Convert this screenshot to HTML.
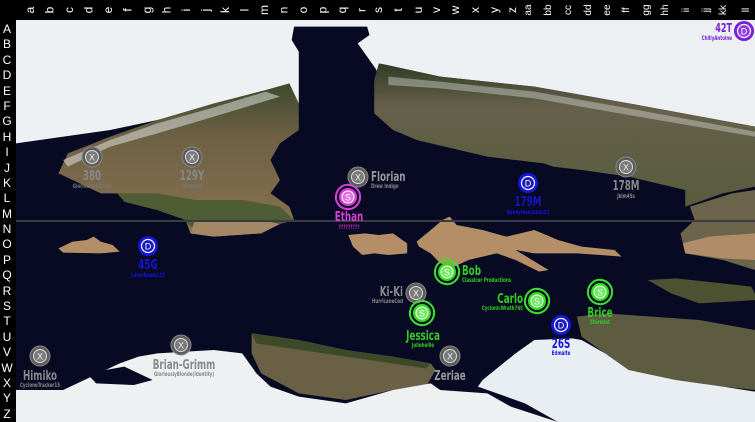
<!DOCTYPE html>
<html><head><meta charset="utf-8"><style>
*{margin:0;padding:0}
body{width:755px;height:422px;background:#000;overflow:hidden;position:relative;font-family:"Liberation Sans",sans-serif}
#map{position:absolute;left:16px;top:20px;width:739px;height:402px}
#ov{position:absolute;left:0;top:0}
</style></head><body>
<svg id="map" viewBox="0 0 1568 1206" preserveAspectRatio="none">
<defs>
<linearGradient id="lg" x1="0" y1="0" x2="0" y2="1"><stop offset="0" stop-color="#3d4a2c"/><stop offset=".35" stop-color="#6e6145"/><stop offset=".7" stop-color="#7d6a4c"/><stop offset="1" stop-color="#8a7452"/></linearGradient>
<linearGradient id="rg" x1="0" y1="0" x2="0" y2="1"><stop offset="0" stop-color="#2f3b24"/><stop offset=".3" stop-color="#66604a"/><stop offset="1" stop-color="#585c3e"/></linearGradient>
</defs>
<rect width="1568" height="1206" fill="#070a22"/>
<polygon fill="#eef1f3" points="0,0 780,0 780,130 770,230 740,215 600,250 530,215 420,260 300,300 200,330 0,370"/>
<polygon fill="#edf0f2" points="760,0 1568,0 1568,320 1300,250 1100,200 900,170 770,130"/>
<polygon fill="#070a22" points="590,20 745,20 750,45 725,70 745,110 765,150 770,270 600,270 600,95 585,60"/>
<polygon fill="url(#lg)" points="90,460 110,400 200,350 300,300 420,250 530,210 580,190 600,250 600,330 560,370 540,420 560,480 540,520 580,560 590,600 560,612 520,640 420,650 370,640 360,600 300,570 230,545 215,520 180,520 120,480"/>
<polygon fill="#4e5d33" points="215,520 300,520 380,540 480,540 560,560 590,600 560,612 520,620 420,630 370,620 360,600 300,570 230,545"/>
<polygon fill="#a48865" points="380,600 520,600 560,612 520,640 420,650 370,640"/>
<polygon fill="#e8ebec" opacity=".5" points="100,420 200,360 300,310 420,262 530,215 560,230 420,290 300,340 200,380 110,440"/>
<polygon fill="url(#rg)" points="760,180 770,130 900,170 1100,200 1300,250 1568,320 1568,500 1500,520 1420,560 1420,510 1300,470 1200,450 1140,440 1120,430 1000,410 850,360 800,330 760,280"/>
<polygon fill="#dfe3e4" opacity=".4" points="790,170 900,185 1100,215 1300,265 1568,335 1568,350 1300,285 1100,235 900,205 790,195"/>
<polygon fill="#6c654c" points="1430,560 1520,520 1568,510 1568,750 1500,720 1420,700 1410,640 1440,600"/>
<polygon fill="#b08d68" points="1415,670 1470,650 1568,640 1568,720 1500,715 1420,700"/>
<polygon fill="#4d5233" points="1340,780 1400,775 1500,790 1560,800 1575,840 1450,850 1390,820"/>
<g fill="#b48e67">
<polygon points="90,685 120,665 150,660 165,650 180,665 205,675 220,695 180,700 100,698"/>
<polygon points="705,645 740,640 770,645 800,640 830,670 830,700 790,705 760,700 735,705 715,680"/>
<polygon points="850,665 880,630 905,600 920,590 935,615 990,630 1040,650 1100,630 1150,660 1200,680 1270,690 1285,710 1240,705 1190,700 1100,700 1060,690 1130,750 1110,755 1060,720 1020,700 960,720 930,740 900,730 880,700 855,680"/>
</g>
<polygon fill="#5e5c40" points="1190,890 1250,880 1350,890 1450,900 1568,930 1568,1110 1500,1100 1400,1080 1300,1050 1250,1000 1200,950"/>
<polygon fill="#6a6046" points="500,940 600,960 700,990 800,1010 880,1030 890,1050 870,1100 800,1110 700,1140 600,1120 520,1060 500,1000"/>
<polygon fill="#3c4a2a" points="500,940 600,960 700,990 800,1010 880,1030 870,1045 700,1010 510,970"/>
<polygon fill="#eef0f2" points="0,1206 0,1110 100,1110 160,1070 220,1030 260,1010 300,1000 420,990 480,1000 510,1060 540,1100 600,1130 700,1150 800,1110 880,1090 900,1110 1000,1120 1050,1160 1150,1206"/>
<polygon fill="#070a22" points="150,1060 230,1040 290,1080 250,1095 170,1090"/>
<polygon fill="#e9eef2" points="990,1080 1060,1000 1100,960 1180,955 1200,960 1250,1000 1300,1050 1400,1080 1500,1100 1568,1115 1568,1206 1150,1206 1080,1150 980,1100"/>
<rect x="0" y="600" width="1568" height="6" fill="#3a3b46"/>
</svg>

<svg id="ov" width="755" height="422" viewBox="0 0 755 422">
<defs>
<g id="X"><circle r="10" fill="#5c5c5c" stroke="#8a8a8a" stroke-width="1"/><circle r="6.5" fill="#7a7a7a" stroke="#ddd" stroke-width="1"/><text y="3.5" text-anchor="middle" font-size="9" fill="#eee">X</text></g>
<g id="D"><circle r="10" fill="#1515e0"/><circle r="6.5" fill="#1a1ab8" stroke="#fff" stroke-width="1.2"/><text y="3.5" text-anchor="middle" font-size="9" fill="#fff">D</text></g>
<g id="S"><g fill="none" stroke="#3ce02a" stroke-width="2"><path d="M0,-12 A12,12 0 0 1 12,2"/><path d="M12,0 A12,12 0 0 1 -2,12"/><path d="M0,12 A12,12 0 0 1 -12,-2"/><path d="M-12,0 A12,12 0 0 1 2,-12"/></g><circle r="9" fill="#33dd22"/><circle r="6" fill="#6fe860" stroke="#fff" stroke-width="1"/><text y="3.5" text-anchor="middle" font-size="9" fill="#fff">S</text></g>
<g id="M"><g fill="none" stroke="#d83fd8" stroke-width="2"><path d="M0,-12 A12,12 0 0 1 12,2"/><path d="M12,0 A12,12 0 0 1 -2,12"/><path d="M0,12 A12,12 0 0 1 -12,-2"/><path d="M-12,0 A12,12 0 0 1 2,-12"/></g><circle r="9" fill="#d43fd4"/><circle r="6" fill="#e070e0" stroke="#fff" stroke-width="1"/><text y="3.5" text-anchor="middle" font-size="9" fill="#fff">S</text></g>
</defs>
<use href="#X" x="92" y="157"/><use href="#X" x="192" y="157"/><use href="#X" x="358" y="177"/><use href="#M" x="348" y="197"/><use href="#D" x="528" y="183"/><use href="#X" x="626" y="167"/><use href="#D" x="148" y="246"/><use href="#S" x="447" y="272"/><use href="#X" x="416" y="293"/><use href="#S" x="422" y="313"/><use href="#S" x="537" y="301"/><use href="#S" x="600" y="292"/><use href="#D" x="561" y="325"/><use href="#X" x="40" y="356"/><use href="#X" x="181" y="345"/><use href="#X" x="450" y="356"/>
<circle cx="744" cy="31" r="10" fill="#7a1fd6"/><circle cx="744" cy="31" r="6.5" fill="#8f3de0" stroke="#fff" stroke-width="1.2"/><text x="744" y="34.5" text-anchor="middle" font-size="9" fill="#fff">D</text>
<g font-family="DejaVu Sans Condensed,Liberation Sans,sans-serif" font-weight="bold">
<g transform="translate(92,180) scale(.75,1)"><text font-size="13" fill="#888" text-anchor="middle">380</text><text y="8" font-size="6" fill="#777" text-anchor="middle">GloriouslyBlonde</text></g>
<g transform="translate(192,180) scale(.75,1)"><text font-size="13" fill="#888" text-anchor="middle">129Y</text><text y="8" font-size="6" fill="#777" text-anchor="middle">Harmony</text></g>
<g transform="translate(371,181) scale(.75,1)"><text font-size="13" fill="#999">Florian</text><text y="7" font-size="6" fill="#888">Drew Indigo</text></g>
<g transform="translate(349,221) scale(.75,1)"><text font-size="13" fill="#d43fd4" text-anchor="middle">Ethan</text><text y="8" font-size="6" fill="#c030c0" text-anchor="middle">?????????</text></g>
<g transform="translate(528,206) scale(.75,1)"><text font-size="13" fill="#1515c8" text-anchor="middle">179M</text><text y="8" font-size="6" fill="#1515d8" text-anchor="middle">Kennylovecanes22</text></g>
<g transform="translate(626,190) scale(.75,1)"><text font-size="13" fill="#888" text-anchor="middle">178M</text><text y="8" font-size="6" fill="#888" text-anchor="middle">Jklm45s</text></g>
<g transform="translate(148,269) scale(.75,1)"><text font-size="13" fill="#1515d8" text-anchor="middle">45G</text><text y="8" font-size="6" fill="#1515d8" text-anchor="middle">LaserBeam123</text></g>
<g transform="translate(462,275) scale(.75,1)"><text font-size="13" fill="#33cc22">Bob</text><text y="7" font-size="6" fill="#33cc22">Classicer Productions</text></g>
<g transform="translate(403,296) scale(.75,1)"><text font-size="13" fill="#888" text-anchor="end">Ki-Ki</text><text y="7" font-size="6" fill="#888" text-anchor="end">HurricaneCed</text></g>
<g transform="translate(423,340) scale(.75,1)"><text font-size="13" fill="#33cc22" text-anchor="middle">Jessica</text><text y="7" font-size="6" fill="#33cc22" text-anchor="middle">Joliehollie</text></g>
<g transform="translate(523,303) scale(.75,1)"><text font-size="13" fill="#33cc22" text-anchor="end">Carlo</text><text y="7" font-size="6" fill="#33cc22" text-anchor="end">CyclonicWrath765</text></g>
<g transform="translate(600,317) scale(.75,1)"><text font-size="13" fill="#33cc22" text-anchor="middle">Brice</text><text y="7" font-size="6" fill="#33cc22" text-anchor="middle">Stormlet</text></g>
<g transform="translate(561,348) scale(.75,1)"><text font-size="13" fill="#1515e0" text-anchor="middle">26S</text><text y="7" font-size="6" fill="#1515e0" text-anchor="middle">Edmaite</text></g>
<g transform="translate(40,380) scale(.75,1)"><text font-size="13" fill="#888" text-anchor="middle">Himiko</text><text y="7" font-size="6" fill="#888" text-anchor="middle">CycloneTracker15</text></g>
<g transform="translate(184,369) scale(.75,1)"><text font-size="13" fill="#888" text-anchor="middle">Brian-Grimm</text><text y="7" font-size="6" fill="#888" text-anchor="middle">GloriouslyBlonde(Identity)</text></g>
<g transform="translate(450,380) scale(.75,1)"><text font-size="13" fill="#999" text-anchor="middle">Zeriae</text></g>
<g transform="translate(732,32) scale(.75,1)"><text font-size="12" fill="#7a1fd6" text-anchor="end">42T</text><text y="8" font-size="6" fill="#7a1fd6" text-anchor="end">ChillyAntoine</text></g>
</g>
<g fill="#fff" font-size="12">
<text x="7" y="33" text-anchor="middle">A</text><text x="7" y="48" text-anchor="middle">B</text><text x="7" y="64" text-anchor="middle">C</text><text x="7" y="79" text-anchor="middle">D</text><text x="7" y="95" text-anchor="middle">E</text><text x="7" y="110" text-anchor="middle">F</text><text x="7" y="125" text-anchor="middle">G</text><text x="7" y="141" text-anchor="middle">H</text><text x="7" y="156" text-anchor="middle">I</text><text x="7" y="172" text-anchor="middle">J</text><text x="7" y="187" text-anchor="middle">K</text><text x="7" y="202" text-anchor="middle">L</text><text x="7" y="218" text-anchor="middle">M</text><text x="7" y="233" text-anchor="middle">N</text><text x="7" y="248" text-anchor="middle">O</text><text x="7" y="264" text-anchor="middle">P</text><text x="7" y="279" text-anchor="middle">Q</text><text x="7" y="295" text-anchor="middle">R</text><text x="7" y="310" text-anchor="middle">S</text><text x="7" y="325" text-anchor="middle">T</text><text x="7" y="341" text-anchor="middle">U</text><text x="7" y="356" text-anchor="middle">V</text><text x="7" y="372" text-anchor="middle">W</text><text x="7" y="387" text-anchor="middle">X</text><text x="7" y="402" text-anchor="middle">Y</text><text x="7" y="418" text-anchor="middle">Z</text>
</g>
<g fill="#fff" font-size="12" text-anchor="middle">
<text transform="translate(30,10) rotate(-90)" dy="4">a</text><text transform="translate(49.5,10) rotate(-90)" dy="4">b</text><text transform="translate(69,10) rotate(-90)" dy="4">c</text><text transform="translate(88.5,10) rotate(-90)" dy="4">d</text><text transform="translate(108,10) rotate(-90)" dy="4">e</text><text transform="translate(127.5,10) rotate(-90)" dy="4">f</text><text transform="translate(147,10) rotate(-90)" dy="4">g</text><text transform="translate(166.5,10) rotate(-90)" dy="4">h</text><text transform="translate(186,10) rotate(-90)" dy="4">i</text><text transform="translate(205.5,10) rotate(-90)" dy="4">j</text><text transform="translate(225,10) rotate(-90)" dy="4">k</text><text transform="translate(244.5,10) rotate(-90)" dy="4">l</text><text transform="translate(264,10) rotate(-90)" dy="4">m</text><text transform="translate(283.5,10) rotate(-90)" dy="4">n</text><text transform="translate(303,10) rotate(-90)" dy="4">o</text><text transform="translate(322.5,10) rotate(-90)" dy="4">p</text><text transform="translate(342,10) rotate(-90)" dy="4">q</text><text transform="translate(361.5,10) rotate(-90)" dy="4">r</text><text transform="translate(378,10) rotate(-90)" dy="4">s</text><text transform="translate(398,10) rotate(-90)" dy="4">t</text><text transform="translate(418,10) rotate(-90)" dy="4">u</text><text transform="translate(436,10) rotate(-90)" dy="4">v</text><text transform="translate(455,10) rotate(-90)" dy="4">w</text><text transform="translate(475,10) rotate(-90)" dy="4">x</text><text transform="translate(494,10) rotate(-90)" dy="4">y</text><text transform="translate(512,10) rotate(-90)" dy="4">z</text><text transform="translate(527,10) rotate(-90)" dy="4" font-size="10">aa</text><text transform="translate(547,10) rotate(-90)" dy="4" font-size="10">bb</text><text transform="translate(567,10) rotate(-90)" dy="4" font-size="10">cc</text><text transform="translate(587,10) rotate(-90)" dy="4" font-size="10">dd</text><text transform="translate(606,10) rotate(-90)" dy="4" font-size="10">ee</text><text transform="translate(625,10) rotate(-90)" dy="4" font-size="10">ff</text><text transform="translate(645,10) rotate(-90)" dy="4" font-size="10">gg</text><text transform="translate(664,10) rotate(-90)" dy="4" font-size="10">hh</text><text transform="translate(685,10) rotate(-90)" dy="4" font-size="10">ii</text><text transform="translate(705,10) rotate(-90)" dy="4" font-size="10">jj</text><text transform="translate(722,10) rotate(-90)" dy="4" font-size="10">kk</text><text transform="translate(745,10) rotate(-90)" dy="4" font-size="10">ll</text>
</g>
</svg>
</body></html>
